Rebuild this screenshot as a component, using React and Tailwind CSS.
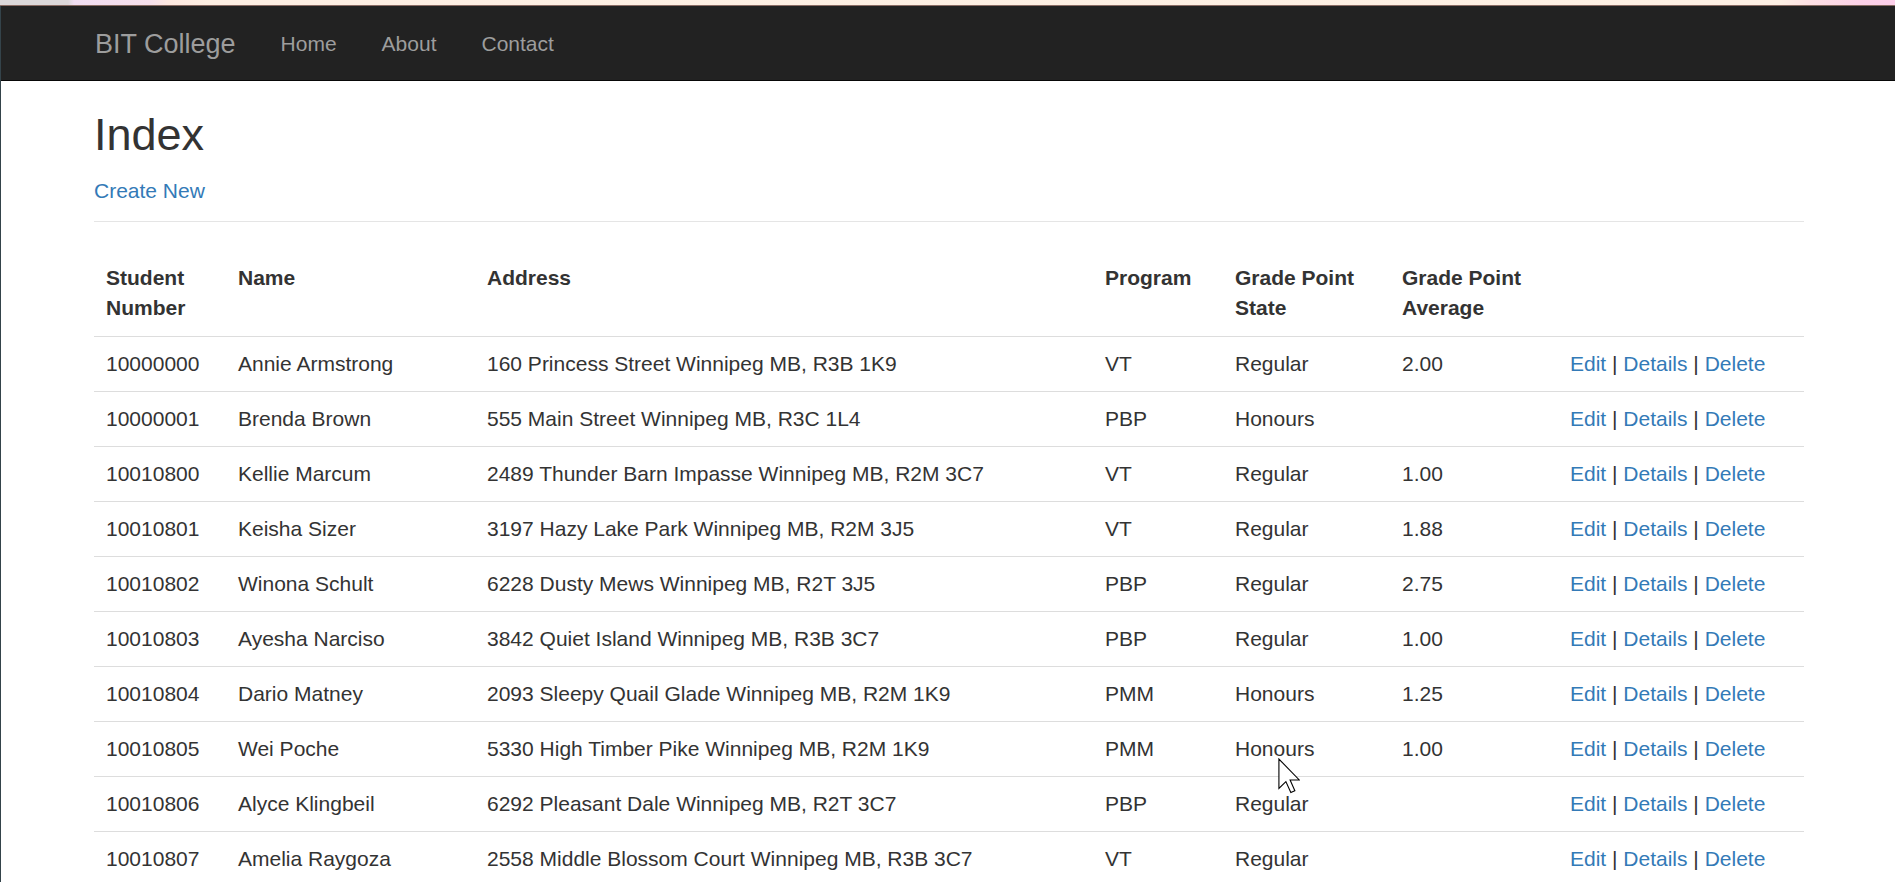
import React from "react";

const students = [
  { number: "10000000", name: "Annie Armstrong", address: "160 Princess Street Winnipeg MB, R3B 1K9", program: "VT", state: "Regular", gpa: "2.00" },
  { number: "10000001", name: "Brenda Brown", address: "555 Main Street Winnipeg MB, R3C 1L4", program: "PBP", state: "Honours", gpa: "" },
  { number: "10010800", name: "Kellie Marcum", address: "2489 Thunder Barn Impasse Winnipeg MB, R2M 3C7", program: "VT", state: "Regular", gpa: "1.00" },
  { number: "10010801", name: "Keisha Sizer", address: "3197 Hazy Lake Park Winnipeg MB, R2M 3J5", program: "VT", state: "Regular", gpa: "1.88" },
  { number: "10010802", name: "Winona Schult", address: "6228 Dusty Mews Winnipeg MB, R2T 3J5", program: "PBP", state: "Regular", gpa: "2.75" },
  { number: "10010803", name: "Ayesha Narciso", address: "3842 Quiet Island Winnipeg MB, R3B 3C7", program: "PBP", state: "Regular", gpa: "1.00" },
  { number: "10010804", name: "Dario Matney", address: "2093 Sleepy Quail Glade Winnipeg MB, R2M 1K9", program: "PMM", state: "Honours", gpa: "1.25" },
  { number: "10010805", name: "Wei Poche", address: "5330 High Timber Pike Winnipeg MB, R2M 1K9", program: "PMM", state: "Honours", gpa: "1.00" },
  { number: "10010806", name: "Alyce Klingbeil", address: "6292 Pleasant Dale Winnipeg MB, R2T 3C7", program: "PBP", state: "Regular", gpa: "" },
  { number: "10010807", name: "Amelia Raygoza", address: "2558 Middle Blossom Court Winnipeg MB, R3B 3C7", program: "VT", state: "Regular", gpa: "" },
];

const navLinks = ["Home", "About", "Contact"];

// mouse pointer captured in the screenshot
const Cursor = () => (
  <svg
    className="absolute left-[1278px] top-[758px] pointer-events-none"
    width="22"
    height="36"
    viewBox="0 0 12 19.5"
  >
    <path
      d="M0.5 0.5 L0.5 16.5 L4.3 12.8 L7 18.8 L9.2 17.8 L6.6 11.9 L11.6 11.9 Z"
      fill="#fff"
      stroke="#000"
      strokeWidth="0.6"
    />
  </svg>
);

const App = () => {
  return (
    <div className="relative min-h-screen bg-white font-['Liberation_Sans',Arial,sans-serif] text-[#333]">
      {/* Window chrome strip */}
      <div className="h-[6px] border-b border-[#8a6c64] bg-[linear-gradient(to_right,#dcd8da_0px,#dcd8da_68px,#f1def2_74px,#f6e0ec_150px,#fde8e0_168px,#fdefe3_210px,#fdf0e4_1780px,#fde0e4_1810px,#fcd2e8_1860px,#fccfea_1895px)]" />

      <div className="border-l border-[#34434a]">
        {/* Navbar */}
        <nav className="h-[75px] bg-[#222] border-b border-[#080808]">
          <div className="ml-[94px] w-[1710px] h-[74px] pt-[2px] flex items-center">
            <a href="#" className="text-[27px] leading-[30px] text-[#9d9d9d] pr-[22.5px]">
              BIT College
            </a>
            {navLinks.map((link) => (
              <a
                key={link}
                href="#"
                className="text-[21px] leading-[30px] text-[#9d9d9d] px-[22.5px]"
              >
                {link}
              </a>
            ))}
          </div>
        </nav>

        {/* Body content */}
        <div className="ml-[93px] w-[1710px]">
          <h2 className="mt-[29px] mb-[16.5px] text-[45px] leading-[1.1] font-normal text-[#333]">
            Index
          </h2>
          <p className="text-[21px] leading-[30px] mb-[15px]">
            <a href="#" className="text-[#337ab7]">Create New</a>
          </p>
          <hr className="border-0 border-t border-[#e5e5e5]" />

          <table className="mt-[29px] w-[1710px] table-fixed text-[21px] leading-[30px]">
            <colgroup>
              <col className="w-[132px]" />
              <col className="w-[249px]" />
              <col className="w-[618px]" />
              <col className="w-[130px]" />
              <col className="w-[167px]" />
              <col className="w-[168px]" />
              <col className="w-[246px]" />
            </colgroup>
            <thead>
              <tr className="border-b border-[#ddd]">
                <th className="px-3 pt-3 pb-[13px] text-left align-top font-bold">Student Number</th>
                <th className="px-3 pt-3 pb-[13px] text-left align-top font-bold">Name</th>
                <th className="px-3 pt-3 pb-[13px] text-left align-top font-bold">Address</th>
                <th className="px-3 pt-3 pb-[13px] text-left align-top font-bold">Program</th>
                <th className="px-3 pt-3 pb-[13px] text-left align-top font-bold">Grade Point State</th>
                <th className="px-3 pt-3 pb-[13px] text-left align-top font-bold">Grade Point Average</th>
                <th className="px-3 pt-3 pb-[13px]" />
              </tr>
            </thead>
            <tbody>
              {students.map((s) => (
                <tr key={s.number} className="border-t border-[#ddd]">
                  <td className="p-3">{s.number}</td>
                  <td className="p-3">{s.name}</td>
                  <td className="p-3 whitespace-nowrap">{s.address}</td>
                  <td className="p-3">{s.program}</td>
                  <td className="p-3">{s.state}</td>
                  <td className="p-3">{s.gpa}</td>
                  <td className="p-3 whitespace-nowrap">
                    <a href="#" className="text-[#337ab7]">Edit</a> |{" "}
                    <a href="#" className="text-[#337ab7]">Details</a> |{" "}
                    <a href="#" className="text-[#337ab7]">Delete</a>
                  </td>
                </tr>
              ))}
            </tbody>
          </table>
        </div>
      </div>

      <Cursor />
    </div>
  );
};

export default App;
